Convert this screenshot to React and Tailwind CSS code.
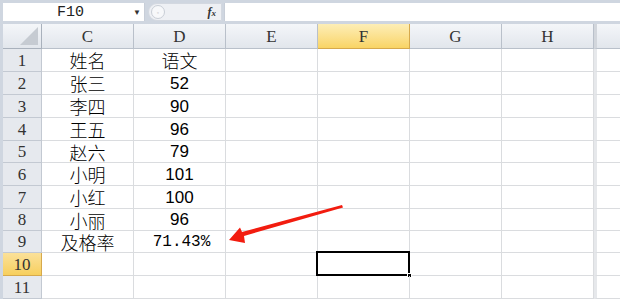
import React from "react";

const cols = ["C", "D", "E", "F", "G", "H"];
const rowHeights = [23, 23, 23, 23, 22, 23, 23, 22, 22, 23, 23];

const data = [
  ["姓名", "语文"],
  ["张三", "52"],
  ["李四", "90"],
  ["王五", "96"],
  ["赵六", "79"],
  ["小明", "101"],
  ["小红", "100"],
  ["小丽", "96"],
  ["及格率", "71.43%"],
  ["", ""],
  ["", ""],
];

const cjk = { fontFamily: '"Noto Sans CJK SC", sans-serif' };
const sans = { fontFamily: '"Liberation Sans", Arial, sans-serif' };
const mono = { fontFamily: '"Liberation Mono", monospace' };
const serif = { fontFamily: '"Liberation Serif", serif' };

function FormulaBar() {
  return (
    <div className="flex h-[24px] bg-[#cfd6e0] pt-[3px] pb-[3px] pl-[3px]">
      <div className="flex w-[142px] items-center bg-white border-r border-[#c8ced8]">
        <span className="flex-1 pl-[54px] text-[15px] text-[#222] leading-none" style={mono}>F10</span>
        <span className="mr-[3px] text-[8px] text-[#333] leading-none">▼</span>
      </div>
      <div className="flex w-[74px] items-center bg-[#eef0f4] rounded-l-[9px] ml-[3px] border border-[#d3d8e0]">
        <div className="ml-[2px] w-[14px] h-[14px] rounded-full border border-[#c9ced6] bg-[#f7f8fa] flex items-center justify-center">
          <span className="text-[7px] text-[#bbb] leading-none">◦</span>
        </div>
        <span className="ml-auto mr-[5px] text-[12px] italic font-bold text-[#333] leading-none" style={serif}>
          f<span className="text-[9px]">x</span>
        </span>
      </div>
      <div className="flex-1 bg-white ml-[2px] border-l border-[#c8ced8]" />
    </div>
  );
}

export default function App() {
  return (
    <div className="relative w-[620px] h-[304px] overflow-hidden bg-white">
      <FormulaBar />
      <div className="flex">
        <div className="w-[3px] bg-[#cfd6e0]" />
        <div className="flex-1">
          <div className="grid grid-cols-[39px_92px_92px_92px_92px_92px_92px_1fr]">
            {/* header row */}
            <div className="relative h-[25px] bg-gradient-to-b from-[#f4f6f9] to-[#e2e6ec] border-r border-b border-[#a9b1bc] overflow-hidden">
              <div className="absolute right-[3px] bottom-[3px] w-0 h-0 border-l-[18px] border-l-transparent border-b-[18px] border-b-[#c6cbd2]" />
            </div>
            {cols.map((c) => (
              <div
                key={c}
                className={
                  c === "F"
                    ? "h-[25px] flex items-center justify-center bg-gradient-to-b from-[#fdeeb6] to-[#f9d464] border-r border-b border-[#d6a94c] text-[17px] text-[#333] leading-none"
                    : "h-[25px] flex items-center justify-center bg-gradient-to-b from-[#f4f6f9] to-[#e2e6ec] border-r border-b border-[#b9c0ca] text-[17px] text-[#333] leading-none"
                }
                style={serif}
              >
                {c}
              </div>
            ))}
            <div className="h-[25px] bg-gradient-to-b from-[#f4f6f9] to-[#e2e6ec] border-b border-[#b9c0ca] border-l-[3px] border-l-[#d2d6dc]" />

            {rowHeights.map((h, i) => {
              const r = i + 1;
              const active = r === 10;
              const [name, score] = data[i];
              return (
                <React.Fragment key={r}>
                  <div
                    className={
                      active
                        ? "flex items-center justify-center bg-gradient-to-b from-[#fbe199] to-[#f7cf5c] border-r border-b border-[#d6a94c] text-[17px] text-[#333] leading-none"
                        : "flex items-center justify-center bg-[#e6e9ee] border-r border-b border-[#c3c9d2] text-[17px] text-[#333] leading-none"
                    }
                    style={{ ...serif, height: h }}
                  >
                    {r}
                  </div>
                  <div
                    className="flex items-center justify-center border-r border-b border-[#dadcdf] text-[18px] font-light text-black leading-none"
                    style={{ ...cjk, height: h }}
                  >
                    {name}
                  </div>
                  <div
                    className={
                      r === 1
                        ? "flex items-center justify-center border-r border-b border-[#dadcdf] text-[18px] font-light text-black leading-none"
                        : "flex items-center justify-center border-r border-b border-[#dadcdf] text-[17px] text-black leading-none"
                    }
                    style={{ ...(r === 1 ? cjk : r === 9 ? mono : sans), height: h }}
                  >
                    {r === 9 ? <span className="text-[16px] pl-[4px]">{score}</span> : score}
                  </div>
                  <div className="border-r border-b border-[#dadcdf]" style={{ height: h }} />
                  <div className="relative border-r border-b border-[#dadcdf]" style={{ height: h }}>
                    {active && (
                      <div className="absolute -left-[2px] -top-[2px] w-[94px] h-[25px] border-2 border-black">
                        <div className="absolute -right-[4px] -bottom-[4px] w-[5px] h-[5px] bg-black border border-white" />
                      </div>
                    )}
                  </div>
                  <div className="border-r border-b border-[#dadcdf]" style={{ height: h }} />
                  <div className="border-r border-b border-[#dadcdf]" style={{ height: h }} />
                  <div className="border-b border-[#dadcdf] border-l-[3px] border-l-[#e6e8eb]" style={{ height: h }} />
                </React.Fragment>
              );
            })}
          </div>
        </div>
      </div>

      {/* red annotation arrow */}
      <svg className="absolute left-0 top-0" width="620" height="304" viewBox="0 0 620 304">
        <path d="M342 205 L343 207.5 L244 236 L245 243 L229 240 L240 227.5 L242 232 Z" fill="#f21c0f" />
      </svg>
    </div>
  );
}
